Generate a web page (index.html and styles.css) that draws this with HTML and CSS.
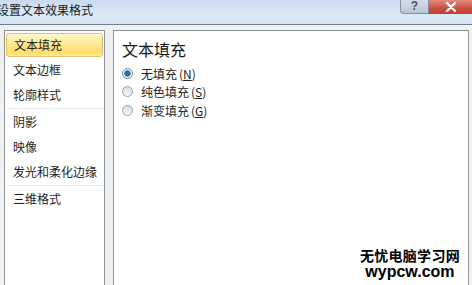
FILE: index.html
```html
<!DOCTYPE html>
<html lang="zh-CN">
<head>
  <meta charset="UTF-8">
  <title>设置文本效果格式</title>
  <link rel="stylesheet" href="styles.css">
</head>
<body>
  <div class="window">
    <div class="titlebar">
      <span class="title">设置文本效果格式</span>
      <div class="controls">
        <span class="btn-help">?</span>
        <span class="btn-close">
          <svg width="12" height="10" viewBox="0 0 12 10"><path d="M2 1 L10 9 M10 1 L2 9" stroke="#fff" stroke-width="2.4" stroke-linecap="round"/></svg>
        </span>
      </div>
    </div>
    <div class="main">
      <ul class="nav">
        <li class="selected">文本填充</li>
        <li>文本边框</li>
        <li>轮廓样式</li>
        <li class="sep"></li>
        <li>阴影</li>
        <li>映像</li>
        <li>发光和柔化边缘</li>
        <li class="sep"></li>
        <li>三维格式</li>
      </ul>
      <div class="panel">
        <h2>文本填充</h2>
        <div class="option"><span class="radio checked"></span>无填充<span class="key">(<u>N</u>)</span></div>
        <div class="option"><span class="radio"></span>纯色填充<span class="key">(<u>S</u>)</span></div>
        <div class="option"><span class="radio"></span>渐变填充<span class="key">(<u>G</u>)</span></div>
      </div>
    </div>
    <div class="watermark">
      <div class="wm-cn">无忧电脑学习网</div>
      <div class="wm-en">wypcw.com</div>
    </div>
  </div>
</body>
</html>
```

FILE: styles.css
```css
html, body { margin:0; padding:0; }
body { width:472px; height:285px; overflow:hidden; background:#f0f0f0; font-family:"Noto Sans CJK SC", sans-serif; color:#1e1e1e; }
.window { position:relative; height:285px; }

.titlebar { height:24px; border-bottom:1px solid #6f7f92; background:linear-gradient(#c9dbef, #dbe8f6 60%, #d6e4f3); display:flex; justify-content:space-between; align-items:flex-start; }
.title { font-size:12px; line-height:20px; margin-left:-3px; color:#1a1a1a; }
.controls { display:flex; }
.btn-help { width:27px; height:13px; border:1px solid #8190a2; border-top:none; border-radius:0 0 0 4px; background:linear-gradient(#d4dde8, #b9c6d5); color:#4a5563; font:bold 12px/12px "Liberation Sans", sans-serif; text-align:center; }
.btn-close { width:43px; height:14px; background:linear-gradient(#e08b7e, #c8503e 60%, #c0412f); display:flex; justify-content:center; align-items:center; }

.main { display:flex; gap:8px; padding:5px 3px 0 4px; height:255px; }

.nav { list-style:none; margin:0; padding:1px 1px 0; width:97px; background:#fff; border:1px solid #8c939b; border-bottom:none; font-size:12px; }
.nav li { height:24px; line-height:24px; margin-bottom:1px; padding-left:7px; }
.nav li.selected { margin-top:1px; height:22px; line-height:22px; border:1px solid #e3c264; border-radius:3px; background:linear-gradient(#fff6cc, #fde88e 50%, #fcdd6c 85%, #fdeaa6); }
.nav li.sep { height:0; line-height:0; margin:0 0 1px; padding:0; border-top:1px solid #e6e6e6; }

.panel { flex:1; background:#fff; border:1px solid #8c939b; border-bottom:none; padding:8px 8px 0; }
.panel h2 { margin:0 0 5px; font-size:16px; line-height:20px; font-weight:normal; color:#1a1a1a; }
.option { display:flex; align-items:center; height:18.5px; font-size:12px; }
.option .key { margin-left:2px; }
.radio { width:9px; height:9px; border:1px solid #9aa3ad; border-radius:50%; background:linear-gradient(#dcdcdc, #f7f7f7); margin:0 8px 0 0; box-sizing:content-box; }
.radio.checked { background:radial-gradient(circle, #2b6e9c 0 2.5px, #5a9ac4 3px, #e9eef3 3.6px); border-color:#7d8b99; }

.watermark { position:absolute; right:12px; top:247px; text-align:center; color:#000; }
.wm-cn { font-size:14px; line-height:16px; font-weight:bold; letter-spacing:0.3px; }
.wm-en { font:bold 16px/17px "Liberation Sans", sans-serif; }
```
